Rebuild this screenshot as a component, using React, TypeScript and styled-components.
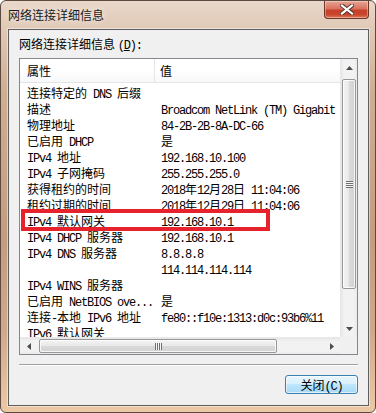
import React from "react";
import styled, { createGlobalStyle } from "styled-components";

const GlobalStyle = createGlobalStyle`
  html, body {
    margin: 0;
    padding: 0;
    background: #ffffff;
  }
`;

const CJK = `"Noto Sans CJK SC", "Noto Sans", sans-serif`;

const rows: [string, string][] = [
  ["连接特定的 DNS 后缀", ""],
  ["描述", "Broadcom NetLink (TM) Gigabit"],
  ["物理地址", "84-2B-2B-8A-DC-66"],
  ["已启用 DHCP", "是"],
  ["IPv4 地址", "192.168.10.100"],
  ["IPv4 子网掩码", "255.255.255.0"],
  ["获得租约的时间", "2018年12月28日 11:04:06"],
  ["租约过期的时间", "2018年12月29日 11:04:06"],
  ["IPv4 默认网关", "192.168.10.1"],
  ["IPv4 DHCP 服务器", "192.168.10.1"],
  ["IPv4 DNS 服务器", "8.8.8.8"],
  ["", "114.114.114.114"],
  ["IPv4 WINS 服务器", ""],
  ["已启用 NetBIOS ove...", "是"],
  ["连接-本地 IPv6 地址", "fe80::f10e:1313:d0c:93b6%11"],
  ["IPv6 默认网关", ""],
];

// latin runs get a narrow mono face so they take 6px per char like SimSun
const Latin = styled.span`
  font-family: "Liberation Mono", "DejaVu Sans Mono", monospace;
  font-size: 12px;
  letter-spacing: -1.2px;
  white-space: pre;
`;

const Txt = ({ s }: { s: string }) => (
  <>
    {s.split(/([\x20-\x7e]+)/).map((p, i) =>
      /^[\x20-\x7e]+$/.test(p) ? <Latin key={i}>{p}</Latin> : p
    )}
  </>
);

const Window = styled.div`
  position: relative;
  width: 376px;
  height: 413px;
  box-sizing: border-box;
  border: 1px solid #5c4a3e;
  border-radius: 6px;
  display: flex;
  flex-direction: column;
  overflow: hidden;
  background: linear-gradient(
    to bottom,
    #e9d8cb 0px,
    #e0c9b6 28px,
    #d0ae92 90px,
    #c49c7e 240px,
    #d0a98a 330px,
    #ecc9a6 100%
  );
  font-family: ${CJK};
`;

const TitleBar = styled.div`
  height: 28px;
  display: flex;
  align-items: flex-start;
  justify-content: space-between;
  padding-left: 7px;
  padding-right: 6px;
`;

const Title = styled.div`
  height: 28px;
  line-height: 27px;
  font-size: 12px;
  color: #1a1a1a;
  text-shadow: 0 0 6px rgba(255, 255, 255, 0.9);
`;

const CloseBtn = styled.div`
  width: 45px;
  height: 18px;
  box-sizing: border-box;
  border: 1px solid #6e3426;
  border-top: none;
  border-radius: 0 0 4px 4px;
  background: linear-gradient(
    to bottom,
    #e7a596 0%,
    #d9735f 45%,
    #c7402a 55%,
    #c9452c 80%,
    #dd7a5c 100%
  );
  box-shadow: inset 0 0 0 1px rgba(255, 255, 255, 0.35);
  display: flex;
  align-items: center;
  justify-content: center;
`;

const Client = styled.div`
  flex: 1;
  margin: 0 6px 6px 7px;
  border: 1px solid #5e5e5e;
  box-shadow: 0 0 0 1px rgba(255, 255, 255, 0.45);
  background: #f0f0f0;
  display: flex;
  flex-direction: column;
  padding: 6px 10px 0 10px;
`;

const Label = styled.div`
  font-size: 12px;
  line-height: 16px;
  color: #000;
  margin-bottom: 4px;
  u {
    text-decoration: underline;
  }
`;

const ListView = styled.div`
  height: 297px;
  box-sizing: border-box;
  border: 1px solid #828790;
  background: #fff;
  display: grid;
  grid-template-columns: 1fr 17px;
  grid-template-rows: 1fr 17px;
  overflow: hidden;
`;

const Content = styled.div`
  overflow: hidden;
  display: flex;
  flex-direction: column;
`;

const Header = styled.div`
  height: 23px;
  flex-shrink: 0;
  border-bottom: 1px solid #e5e5e5;
  background: linear-gradient(to bottom, #ffffff 0%, #ffffff 50%, #f7f8fa 100%);
  display: grid;
  grid-template-columns: 135px 1fr;
`;

const HeadCell = styled.div<{ $first?: boolean }>`
  font-size: 12px;
  line-height: 23px;
  padding-left: ${(p) => (p.$first ? "7px" : "5px")};
  border-right: ${(p) => (p.$first ? "1px solid #e5e5e5" : "none")};
  color: #000;
`;

const Body = styled.div`
  padding-top: 2px;
`;

const Row = styled.div`
  height: 16px;
  display: grid;
  grid-template-columns: 135px 1fr;
  font-size: 12px;
  line-height: 16px;
  color: #000;
  white-space: nowrap;
`;

const Cell = styled.div<{ $first?: boolean }>`
  padding-left: ${(p) => (p.$first ? "7px" : "6px")};
  overflow: visible;
`;

const VScroll = styled.div`
  grid-row: 1;
  grid-column: 2;
  display: flex;
  flex-direction: column;
  background: linear-gradient(to right, #e6e6e6 0px, #f2f2f2 3px, #f2f2f2 13px, #e9e9e9 100%);
  border-left: 1px solid #e8e8e8;
`;

const HScroll = styled.div`
  grid-row: 2;
  grid-column: 1;
  display: flex;
  background: linear-gradient(to bottom, #e6e6e6 0px, #f2f2f2 3px, #f2f2f2 13px, #e9e9e9 100%);
  border-top: 1px solid #e8e8e8;
`;

const Corner = styled.div`
  grid-row: 2;
  grid-column: 2;
  background: #f0f0f0;
`;

const ArrowBox = styled.div`
  width: 17px;
  height: 17px;
  flex-shrink: 0;
  display: flex;
  align-items: center;
  justify-content: center;
`;

const Track = styled.div<{ $vertical?: boolean }>`
  flex: 1;
  display: flex;
  flex-direction: ${(p) => (p.$vertical ? "column" : "row")};
`;

const Thumb = styled.div<{ $vertical?: boolean }>`
  box-sizing: border-box;
  border: 1px solid #979797;
  border-radius: 2px;
  box-shadow: inset 0 0 0 1px rgba(255, 255, 255, 0.8);
  background: linear-gradient(
    ${(p) => (p.$vertical ? "to right" : "to bottom")},
    #f4f4f4 0%,
    #e8e8e8 50%,
    #dadada 51%,
    #d2d2d2 100%
  );
  display: flex;
  align-items: center;
  justify-content: center;
  ${(p) => (p.$vertical ? "margin: 0 1px 0 1px;" : "margin: 1px 0 1px 0;")}
`;

const Grip = styled.div<{ $vertical?: boolean }>`
  width: 7px;
  height: 7px;
  background: repeating-linear-gradient(
    ${(p) => (p.$vertical ? "to bottom" : "to right")},
    #6e6e6e 0px,
    #6e6e6e 1px,
    #f6f6f6 1px,
    #f6f6f6 2px
  );
`;

const Separator = styled.div`
  margin-top: 9px;
  height: 1px;
  background: #a0a0a0;
  border-bottom: 1px solid #ffffff;
`;

const ButtonRow = styled.div`
  display: flex;
  justify-content: flex-end;
  margin-top: 9px;
`;

const Button = styled.div`
  width: 73px;
  height: 19px;
  box-sizing: border-box;
  border: 1px solid #3c7fb1;
  border-radius: 3px;
  background: linear-gradient(
    to bottom,
    #eaf6fd 0%,
    #d9f0fc 45%,
    #bee6fd 50%,
    #a7d9f5 100%
  );
  box-shadow: inset 0 0 0 1px rgba(255, 255, 255, 0.6);
  font-size: 12px;
  line-height: 17px;
  text-align: center;
  color: #000;
`;

const Highlight = styled.div`
  position: absolute;
  left: 20px;
  top: 208px;
  width: 249px;
  height: 22px;
  box-sizing: border-box;
  border: 4px solid #e6222c;
  pointer-events: none;
`;

const Arrow = ({ dir }: { dir: "up" | "down" | "left" | "right" }) => {
  const pts = {
    up: "0,4 7,4 3.5,0",
    down: "0,0 7,0 3.5,4",
    left: "4,0 4,7 0,3.5",
    right: "0,0 0,7 4,3.5",
  }[dir];
  const vertical = dir === "up" || dir === "down";
  return (
    <svg width={vertical ? 7 : 4} height={vertical ? 4 : 7}>
      <polygon points={pts} fill="#4d4d4d" />
    </svg>
  );
};

const CloseGlyph = () => (
  <svg width="14" height="11" viewBox="0 0 14 11">
    <path d="M2 1.5 L12 9.5 M12 1.5 L2 9.5" stroke="#5a3830" strokeWidth="4.2" strokeLinecap="square" />
    <path d="M2 1.5 L12 9.5 M12 1.5 L2 9.5" stroke="#ffffff" strokeWidth="2.2" strokeLinecap="square" />
  </svg>
);

const App = () => {
  return (
    <>
      <GlobalStyle />
      <Window>
        <TitleBar>
          <Title>网络连接详细信息</Title>
          <CloseBtn>
            <CloseGlyph />
          </CloseBtn>
        </TitleBar>
        <Client>
          <Label>
            网络连接详细信息 <Latin>(<u>D</u>):</Latin>
          </Label>
          <ListView>
            <Content>
              <Header>
                <HeadCell $first>属性</HeadCell>
                <HeadCell>值</HeadCell>
              </Header>
              <Body>
                {rows.map(([k, v], i) => (
                  <Row key={i}>
                    <Cell $first>
                      <Txt s={k} />
                    </Cell>
                    <Cell>
                      <Txt s={v} />
                    </Cell>
                  </Row>
                ))}
              </Body>
            </Content>
            <VScroll>
              <ArrowBox>
                <Arrow dir="up" />
              </ArrowBox>
              <Track $vertical>
                <Thumb $vertical style={{ marginTop: 3, height: 210 }}>
                  <Grip $vertical />
                </Thumb>
              </Track>
              <ArrowBox>
                <Arrow dir="down" />
              </ArrowBox>
            </VScroll>
            <HScroll>
              <ArrowBox>
                <Arrow dir="left" />
              </ArrowBox>
              <Track>
                <Thumb style={{ marginLeft: 2, width: 238 }}>
                  <Grip />
                </Thumb>
              </Track>
              <ArrowBox>
                <Arrow dir="right" />
              </ArrowBox>
            </HScroll>
            <Corner />
          </ListView>
          <Separator />
          <ButtonRow>
            <Button>
              关闭<Latin>(C)</Latin>
            </Button>
          </ButtonRow>
        </Client>
        <Highlight />
      </Window>
    </>
  );
};

export default App;
